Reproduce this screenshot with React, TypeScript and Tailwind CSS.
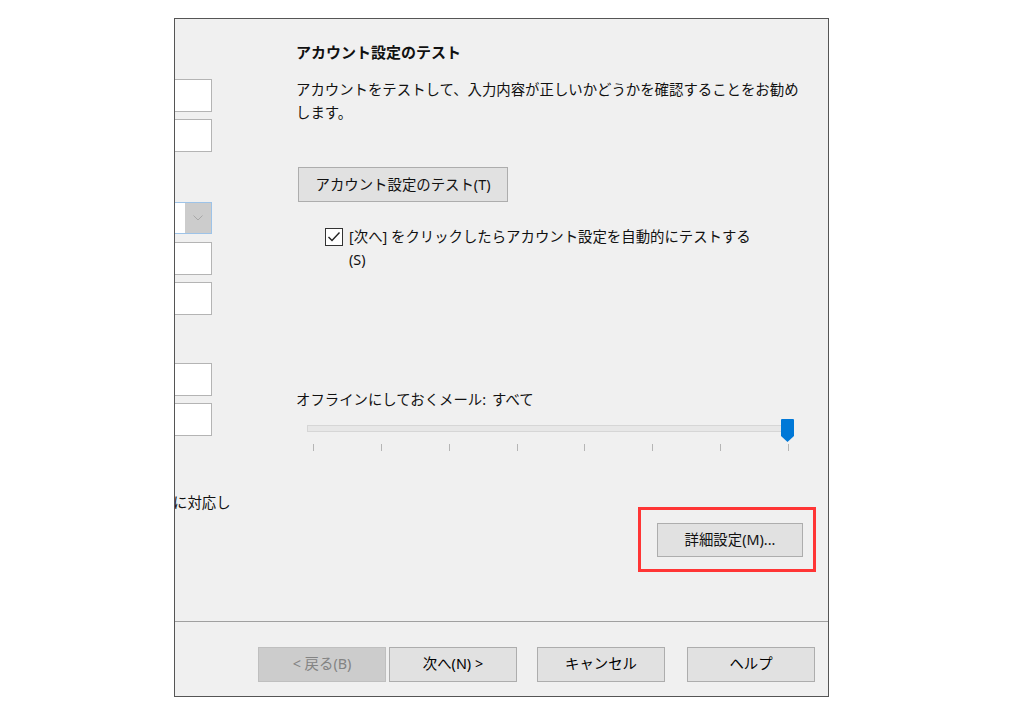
import React from 'react';

const fieldCls = 'h-[33px] w-full border border-[#b4b4b4] bg-white';

function Btn({ label, disabled, className = '' }: { label: string; disabled?: boolean; className?: string }) {
  return (
    <button
      className={
        'flex h-[35px] w-[128px] items-center justify-center border text-[14.4px] leading-none ' +
        (disabled ? 'border-[#bfbfbf] bg-[#cccccc] text-[#838383]' : 'border-[#adadad] bg-[#e1e1e1] text-black') +
        ' ' +
        className
      }
    >
      {label}
    </button>
  );
}

function Slider() {
  const ticks = [0, 1, 2, 3, 4, 5, 6, 7];
  return (
    <div className="ml-[11px] w-[484px]">
      <div className="relative mt-[14px] h-[7px] border border-[#d6d6d6] bg-[#e7e7e7]">
        {/* thumb */}
        <svg className="absolute left-[473px] top-[-7px]" width="13" height="23" viewBox="0 0 13 23">
          <path d="M1 0 H12 Q13 0 13 1 V17 L6.5 23 L0 17 V1 Q0 0 1 0 Z" fill="#0078d7" />
        </svg>
      </div>
      <div className="ml-[6px] mt-[12px] flex w-[476px] justify-between">
        {ticks.map((t) => (
          <div key={t} className="h-[7px] w-px bg-[#b5b5b5]" />
        ))}
      </div>
    </div>
  );
}

export default function App() {
  return (
    <div className="min-h-[721px] bg-white pt-[18px] font-['Noto_Sans','Noto_Sans_CJK_JP',sans-serif] text-[#111]">
      <div className="ml-[174px] flex h-[679px] w-[655px] flex-col overflow-hidden border border-[#555555] bg-[#f0f0f0]">
        {/* upper part */}
        <div className="flex h-[602px]">
          {/* left column, mostly cut off */}
          <div className="ml-[-163px] flex w-[200px] shrink-0 flex-col">
            <div className={'mt-[60px] ' + fieldCls} />
            <div className={'mt-[7px] ' + fieldCls} />
            <div className="mt-[50px] flex h-[32px] w-full border border-[#9dc3e8] bg-white">
              <div className="flex-1" />
              <div className="flex w-[26px] items-center justify-center bg-[#cccccc]">
                <svg width="10" height="6" viewBox="0 0 10 6">
                  <path d="M0.5 0.5 L5 5 L9.5 0.5" fill="none" stroke="#a8a8a8" strokeWidth="1" />
                </svg>
              </div>
            </div>
            <div className={'mt-[8px] ' + fieldCls} />
            <div className={'mt-[7px] ' + fieldCls} />
            <div className={'mt-[48px] ' + fieldCls} />
            <div className={'mt-[7px] ' + fieldCls} />
            <p className="mt-[57px] whitespace-nowrap pl-[161px] text-[14.4px] leading-[20px]">に対応し</p>
          </div>

          {/* right column */}
          <div className="ml-[84px] flex w-[520px] shrink-0 flex-col">
            <h2 className="mt-[23px] text-[15px] font-bold leading-[20px]">アカウント設定のテスト</h2>
            <p className="mt-[16px] whitespace-nowrap text-[14.4px] leading-[23px]">
              アカウントをテストして、入力内容が正しいかどうかを確認することをお勧め
              <br />
              します。
            </p>
            <button className="ml-[2px] mt-[43px] flex h-[35px] w-[210px] items-center justify-center border border-[#adadad] bg-[#e1e1e1] text-[14.4px]">
              アカウント設定のテスト(T)
            </button>
            <div className="ml-[29px] mt-[23px] flex gap-[6px]">
              <svg className="mt-[3px] shrink-0" width="18" height="18" viewBox="0 0 18 18">
                <rect x="0.5" y="0.5" width="17" height="17" fill="#ffffff" stroke="#333333" />
                <path d="M3.5 9 L7 12.5 L14.5 4.5" fill="none" stroke="#222222" strokeWidth="1.4" />
              </svg>
              <p className="whitespace-nowrap text-[14.4px] leading-[23px]">
                [次へ] をクリックしたらアカウント設定を自動的にテストする
                <br />
                (S)
              </p>
            </div>
            <p className="mt-[118px] whitespace-nowrap text-[14.4px] leading-[22px]">
              オフラインにしておくメール:<span className="ml-[6px]">すべて</span>
            </p>
            <Slider />
            <div className="mt-[56px] flex justify-end">
              <div className="h-[65px] w-[178px] border-[3px] border-[#ff3535] pl-[16px] pt-[13px]">
                <button className="flex h-[34px] w-[146px] items-center justify-center border border-[#adadad] bg-[#e1e1e1] text-[14.4px]">
                  詳細設定(M)...
                </button>
              </div>
            </div>
          </div>
        </div>

        {/* footer */}
        <div className="flex h-[75px] border-t border-[#a0a0a0] pl-[83px] pt-[25px]">
          <Btn label="< 戻る(B)" disabled />
          <Btn label="次へ(N) >" className="ml-[3px]" />
          <Btn label="キャンセル" className="ml-[20px]" />
          <Btn label="ヘルプ" className="ml-[22px] w-[126px]" />
        </div>
      </div>
    </div>
  );
}
